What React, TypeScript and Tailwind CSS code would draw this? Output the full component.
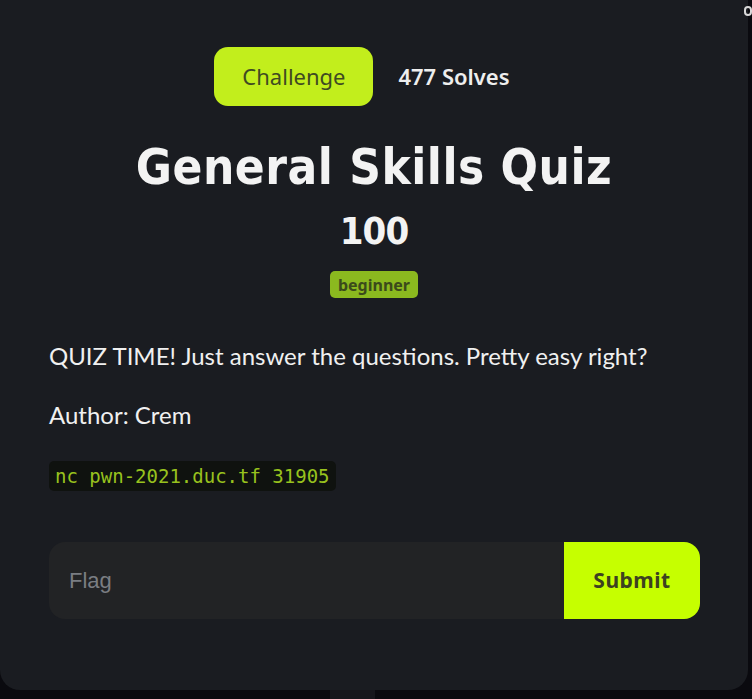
export default function App() {
  return (
    <div className="min-h-[699px] w-[752px] bg-[#0a0a0f] overflow-hidden">
      <div className="relative h-[690px] w-[748px] rounded-b-[20px] bg-[#1a1c21] px-[49px] pt-[47px]">
        <span className="absolute right-[-4px] top-[6px] h-[10px] w-[8px] rounded-full border-2 border-[#d8d8d8]" />
        <div className="flex items-center justify-center gap-[25px] pr-[24px]">
          <div className="flex h-[59px] w-[159px] items-center justify-center rounded-[14px] bg-[#c2ee1c] font-['Noto_Sans',sans-serif] text-[22px] text-[#3f4a22]">
            Challenge
          </div>
          <div className="font-['Noto_Sans',sans-serif] text-[22px] font-semibold text-[#eeeeee]">477 Solves</div>
        </div>
        <h1 className="mt-[33px] text-center font-['DejaVu_Sans_Condensed','DejaVu_Sans',sans-serif] text-[49px] font-bold leading-[58px] tracking-[0.5px] text-[#f3f3f3]">
          General Skills Quiz
        </h1>
        <div className="mt-[12px] text-center font-['DejaVu_Sans_Condensed','DejaVu_Sans',sans-serif] text-[38px] font-bold leading-[44px] tracking-[-1px] text-[#f3f3f3]">
          100
        </div>
        <div className="mt-[18px] flex justify-center">
          <span className="flex h-[27px] items-center rounded-[5px] bg-[#8bb91f] px-[8px] font-['Noto_Sans',sans-serif] text-[16px] font-bold text-[#3b4a1b]">
            beginner
          </span>
        </div>
        <p className="mt-[43px] font-['Lato',sans-serif] text-[24px] leading-[30px] text-[#f0f0f0]">
          QUIZ TIME! Just answer the questions. Pretty easy right?
        </p>
        <p className="mt-[29px] font-['Lato',sans-serif] text-[24px] leading-[30px] text-[#f0f0f0]">Author: Crem</p>
        <div className="mt-[31px]">
          <code className="inline-block rounded-[5px] bg-[#0f120f] px-[6px] py-[2px] font-['DejaVu_Sans_Mono',monospace] text-[19px] leading-[26px] text-[#98c21e]">
            nc pwn-2021.duc.tf 31905
          </code>
        </div>
        <div className="mt-[51px] flex h-[77px] w-[651px]">
          <div className="flex flex-1 items-center rounded-l-[16px] bg-[#222325] pl-[20px] font-['Liberation_Sans',sans-serif] text-[22px] text-[#7a7d82]">
            Flag
          </div>
          <button className="w-[136px] rounded-r-[16px] bg-[#c6ff00] font-['Noto_Sans',sans-serif] text-[21px] font-bold tracking-[0.5px] text-[#3d4220]">
            Submit
          </button>
        </div>
      </div>
      <div className="ml-[330px] h-[9px] w-[45px] bg-[#16161c]" />
    </div>
  );
}
